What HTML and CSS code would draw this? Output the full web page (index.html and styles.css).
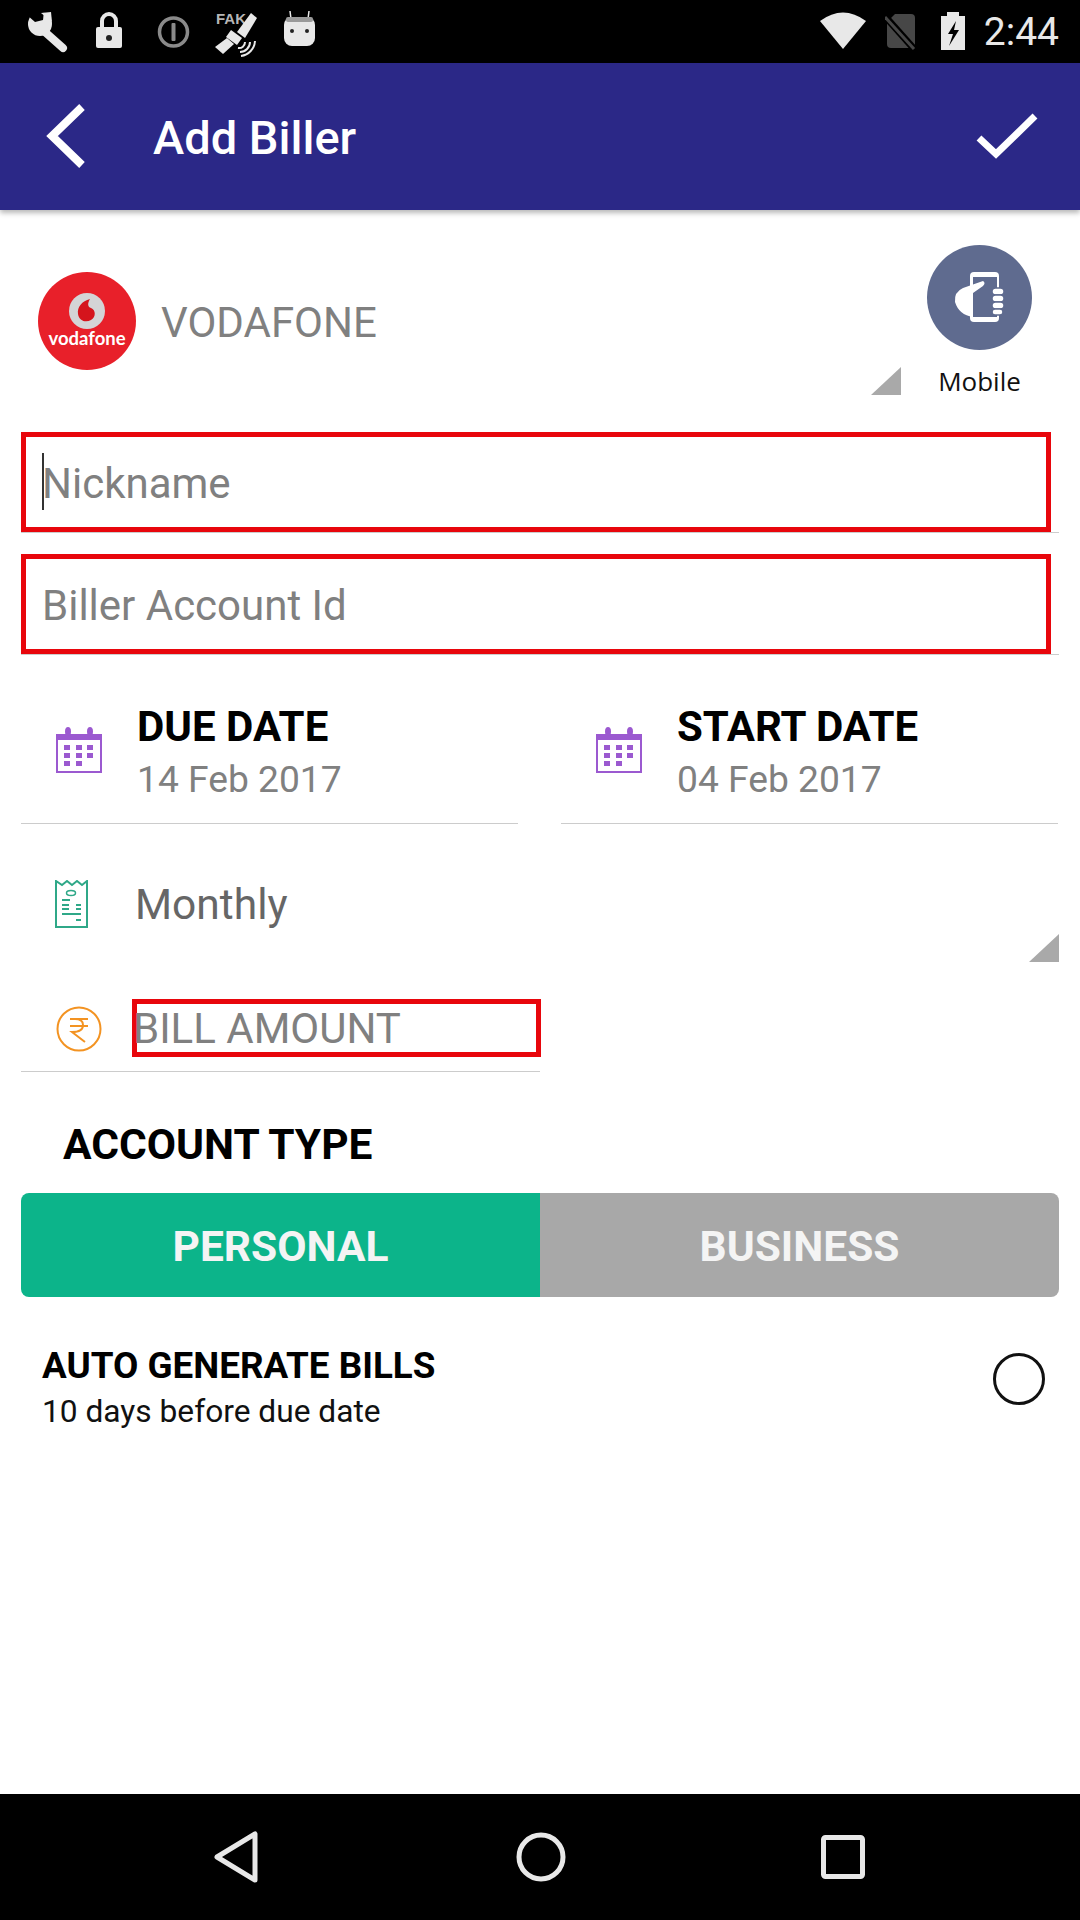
FILE: index.html
```html
<!DOCTYPE html>
<html>
<head>
    <meta charset="UTF-8">
    <title>Add Biller</title>
    <link rel="stylesheet" href="styles.css">
</head>
<body>
<div class="screen">
    <div class="status-bar">
        <svg class="st-wrench" width="41" height="63" viewBox="0 0 41 63">
            <path d="M18 32 L36 48" stroke="#e8e8e8" stroke-width="8" stroke-linecap="round"/>
            <circle cx="13" cy="24" r="12" fill="#e8e8e8"/>
            <path d="M-1 14 L8 22 L16 20 L17 11 L9 5 L0 5 Z" fill="#000"/>
            <path d="M14 13 L24 12 L25 22 Z" fill="#e8e8e8"/>
        </svg>
        <svg class="st-lock" width="26" height="63" viewBox="0 0 26 63">
            <path d="M6 28 V21 A7 7 0 0 1 20 21 V28" fill="none" stroke="#e8e8e8" stroke-width="4"/>
            <rect x="0" y="27" width="26" height="21" rx="2" fill="#e8e8e8"/>
            <circle cx="13" cy="38" r="3" fill="#222"/>
        </svg>
        <svg class="st-info" width="33" height="63" viewBox="0 0 33 63">
            <circle cx="16.5" cy="32" r="14" fill="none" stroke="#8a8a8a" stroke-width="3.5"/>
            <rect x="14.5" y="23" width="4" height="18" rx="1" fill="#8a8a8a"/>
        </svg>
        <svg class="st-sat" width="44" height="63" viewBox="0 0 44 63">
            <text class="fake-label" x="2" y="24">FAK</text>
            <path d="M23 32 L37 13 L43 18 L31 38 Z" fill="#e8e8e8"/>
            <path d="M17 30 L28 38 L23 45 L12 37 Z" fill="#e8e8e8"/>
            <path d="M13 38 L20 44 L9 54 L1 47 Z" fill="#e8e8e8"/>
            <path d="M26 52 A10 10 0 0 0 36 42 M27 56 A16 16 0 0 0 41 41 M24 48 A6 6 0 0 0 31 42" fill="none" stroke="#e8e8e8" stroke-width="2"/>
        </svg>
        <svg class="st-droid" width="31" height="63" viewBox="0 0 31 63">
            <path d="M7 19 L6 11 M24 19 L25 11" stroke="#e8e8e8" stroke-width="1.5"/>
            <rect x="0" y="17" width="31" height="29" rx="8" fill="#e8e8e8"/>
            <rect x="2" y="17" width="27" height="5" rx="2" fill="#9a9a9a"/>
            <circle cx="8" cy="31" r="2" fill="#222"/>
            <circle cx="23" cy="31" r="2" fill="#222"/>
        </svg>
        <svg class="st-wifi" width="46" height="63" viewBox="0 0 46 63">
            <path d="M0 21 Q23 4 46 21 L23 49 Z" fill="#e8e8e8"/>
        </svg>
        <svg class="st-sim" width="32" height="63" viewBox="0 0 32 63">
            <path d="M10 14 H26 Q30 14 30 18 V44 Q30 48 26 48 H6 Q2 48 2 44 V22 Z" fill="#474747"/>
            <path d="M-2 14 L30 50" stroke="#000" stroke-width="7"/>
            <path d="M0 17 L29 49" stroke="#474747" stroke-width="3"/>
        </svg>
        <svg class="st-batt" width="24" height="63" viewBox="0 0 24 63">
            <rect x="6" y="12" width="12" height="5" fill="#e8e8e8"/>
            <rect x="0" y="16" width="24" height="34" fill="#e8e8e8"/>
            <path d="M15 21 L7 34 H12 L8 46 L18 30 H13 Z" fill="#000"/>
        </svg>
        <span class="clock">2:44</span>
    </div>

    <div class="app-bar">
        <svg class="back-icon" width="40" height="64" viewBox="0 0 40 64">
            <path d="M36 3 L6 32 L36 61" fill="none" stroke="#fff" stroke-width="8"/>
        </svg>
        <h1 class="app-title">Add Biller</h1>
        <svg class="done-icon" width="62" height="46" viewBox="0 0 62 46">
            <path d="M3 25 L20 41 L59 3" fill="none" stroke="#fff" stroke-width="7"/>
        </svg>
    </div>

    <div class="content">
        <div class="biller-row">
            <svg class="biller-logo" width="98" height="98" viewBox="0 0 98 98">
                <circle cx="49" cy="49" r="49" fill="#e8202a"/>
                <circle cx="49" cy="39" r="18" fill="#d4d4d6"/>
                <path d="M52 27 C44 29 39 35 40 42 C41 49 48 51 53 48 C58 45 58 38 53 36 C50 35 49 32 52 27 Z" fill="#d5141c"/>
                <text class="logo-word" x="49" y="73">vodafone</text>
            </svg>
            <div class="biller-name">VODAFONE</div>
            <div class="spinner-mark biller-mark"></div>
            <div class="biller-type">
                <svg width="105" height="105" viewBox="0 0 105 105">
                    <circle cx="52.5" cy="52.5" r="52.5" fill="#5f6b8f"/>
                    <rect x="43" y="27" width="29" height="50" rx="4" fill="#fff"/>
                    <rect x="46" y="32" width="24" height="40" fill="#5f6b8f"/>
                    <path d="M56 36 Q59 38 56 41 L46 48 L46 72 Q32 70 28 57 Q27 47 36 43 Z" fill="#fff"/>
                    <g fill="#fff" stroke="#5f6b8f" stroke-width="1.5">
                        <rect x="65" y="43" width="12" height="7" rx="3.5"/>
                        <rect x="65" y="50" width="12" height="7" rx="3.5"/>
                        <rect x="65" y="57" width="12" height="7" rx="3.5"/>
                        <rect x="65" y="64" width="11" height="6" rx="3"/>
                    </g>
                </svg>
                <div class="type-label">Mobile</div>
            </div>
        </div>

        <div class="field">
            <div class="field-box field-caret">
                <span class="caret"></span><span class="hint">Nickname</span>
            </div>
        </div>
        <div class="field field-next">
            <div class="field-box">
                <span class="hint">Biller Account Id</span>
            </div>
        </div>

        <div class="date-row">
            <div class="date-cell">
                <svg class="cal-icon" width="46" height="46" viewBox="0 0 46 46">
                    <use href="#calendar"/>
                </svg>
                <div>
                    <div class="date-title">DUE DATE</div>
                    <div class="date-value">14 Feb 2017</div>
                </div>
            </div>
            <div class="date-cell">
                <svg class="cal-icon" width="46" height="46" viewBox="0 0 46 46">
                    <use href="#calendar"/>
                </svg>
                <div>
                    <div class="date-title">START DATE</div>
                    <div class="date-value">04 Feb 2017</div>
                </div>
            </div>
        </div>

        <div class="cycle-row">
            <svg class="receipt-icon" width="33" height="48" viewBox="0 0 33 48">
                <path d="M1 1 V47 H32 V1 L27 5 L22 1 L17 5 L12 1 L7 5 Z" fill="none" stroke="#2fa888" stroke-width="2"/>
                <ellipse cx="16" cy="13" rx="4.5" ry="2.5" fill="none" stroke="#2fa888" stroke-width="1.5"/>
                <path d="M7 20 H15 M7 25 H14 M21 25 H26 M7 29 H14 M21 29 H26 M7 34 H26 M21 40 H26" stroke="#2fa888" stroke-width="2"/>
            </svg>
            <div class="cycle-text">Monthly</div>
            <div class="spinner-mark cycle-mark"></div>
        </div>

        <div class="amount-row">
            <svg class="rupee-icon" width="46" height="46" viewBox="0 0 46 46">
                <circle cx="23" cy="23" r="21.5" fill="none" stroke="#f39322" stroke-width="2"/>
                <path d="M14 13 H32 M14 20 H32 M19 13 Q27 13 27 19 Q27 26 16 26 L29 36" fill="none" stroke="#f39322" stroke-width="2"/>
            </svg>
            <div class="amount-box"><span class="hint amount-hint">BILL AMOUNT</span></div>
        </div>

        <div class="section-title">ACCOUNT TYPE</div>
        <div class="toggle">
            <div class="toggle-item toggle-on">PERSONAL</div>
            <div class="toggle-item toggle-off">BUSINESS</div>
        </div>

        <div class="auto-row">
            <div>
                <div class="auto-title">AUTO GENERATE BILLS</div>
                <div class="auto-sub">10 days before due date</div>
            </div>
            <div class="radio"></div>
        </div>
    </div>

    <div class="nav-bar">
        <svg width="46" height="52" viewBox="0 0 46 52">
            <path d="M41 3 V49 L3 26 Z" fill="none" stroke="#e8e8e8" stroke-width="5" stroke-linejoin="round"/>
        </svg>
        <svg width="50" height="50" viewBox="0 0 50 50">
            <circle cx="25" cy="25" r="22" fill="none" stroke="#e8e8e8" stroke-width="5"/>
        </svg>
        <svg width="44" height="44" viewBox="0 0 44 44">
            <rect x="2.5" y="2.5" width="39" height="39" rx="2" fill="none" stroke="#e8e8e8" stroke-width="5"/>
        </svg>
    </div>
</div>

<svg class="icon-defs" width="0" height="0">
    <symbol id="calendar" viewBox="0 0 46 46">
        <rect x="1" y="8" width="44" height="37" fill="none" stroke="#9b59d0" stroke-width="2"/>
        <rect x="1" y="7" width="44" height="6" fill="#9b59d0"/>
        <ellipse cx="12" cy="4.5" rx="3" ry="4.5" fill="#9b59d0"/>
        <ellipse cx="34" cy="4.5" rx="3" ry="4.5" fill="#9b59d0"/>
        <g fill="#9b59d0">
            <rect x="8" y="18" width="6" height="5"/>
            <rect x="20" y="18" width="6" height="5"/>
            <rect x="31" y="18" width="6" height="5"/>
            <rect x="8" y="26" width="6" height="5"/>
            <rect x="20" y="26" width="6" height="5"/>
            <rect x="31" y="26" width="6" height="5"/>
            <rect x="8" y="34" width="6" height="5"/>
            <rect x="20" y="34" width="6" height="5"/>
        </g>
    </symbol>
</svg>
</body>
</html>
```

FILE: styles.css
```css
* {
    box-sizing: border-box;
}

body {
    margin: 0;
    background-color: #fff;
    font-family: Roboto, "Liberation Sans", sans-serif;
}

.screen {
    width: 1080px;
    height: 1920px;
    display: flex;
    flex-direction: column;
    overflow: hidden;
}

.icon-defs {
    position: absolute;
}

/* status bar */
.status-bar {
    height: 63px;
    flex-shrink: 0;
    display: flex;
    background-color: #000;
    padding-left: 27px;
}

.st-lock { margin-left: 28px; }
.st-info { margin-left: 35px; }
.st-sat { margin-left: 24px; }
.st-droid { margin-left: 26px; }
.st-wifi { margin-left: auto; }
.st-sim { margin-left: 19px; }
.st-batt { margin-left: 24px; }

.fake-label {
    font-family: "Liberation Sans", sans-serif;
    font-size: 15px;
    font-weight: bold;
    fill: #b5b5b5;
}

.clock {
    margin-left: 19px;
    margin-right: 21px;
    color: #e8e8e8;
    font-size: 39px;
    line-height: 64px;
}

/* app bar */
.app-bar {
    height: 147px;
    flex-shrink: 0;
    display: flex;
    align-items: center;
    padding-left: 46px;
    padding-right: 42px;
    background-color: #2b2887;
    box-shadow: 0 3px 5px rgba(0, 0, 0, 0.28);
    position: relative;
}

.back-icon {
    margin-top: -1px;
}

.app-title {
    margin: 3px 0 0 67px;
    color: #fff;
    font-size: 47px;
    font-weight: 500;
    line-height: 52px;
}

.done-icon {
    margin-left: auto;
    margin-top: -2px;
}

/* form */
.content {
    flex: 1;
}

.biller-row {
    height: 222px;
    display: flex;
    align-items: flex-start;
    padding-left: 38px;
    padding-top: 35px;
}

.biller-logo {
    margin-top: 27px;
}

.logo-word {
    font-family: Lato, sans-serif;
    font-size: 18.5px;
    font-weight: bold;
    fill: #fff;
    text-anchor: middle;
}

.biller-name {
    margin-left: 25px;
    margin-top: 55px;
    color: #808080;
    font-size: 42px;
    line-height: 46px;
}

.spinner-mark {
    width: 30px;
    height: 28px;
    background-color: #a9a9a9;
    clip-path: polygon(100% 0, 100% 100%, 0 100%);
}

.biller-mark {
    margin-left: auto;
    margin-top: 122px;
    margin-right: 26px;
}

.biller-type {
    width: 105px;
    margin-right: 48px;
    text-align: center;
}

.biller-type svg {
    display: block;
}

.type-label {
    margin-top: 13px;
    color: #111;
    font-family: "Open Sans", sans-serif;
    font-size: 26px;
    line-height: 36px;
}

.field {
    height: 101px;
    margin: 0 21px;
    border-bottom: 1px solid #ccc;
}

.field-next {
    margin-top: 21px;
}

.field-box {
    width: 1030px;
    height: 100px;
    display: flex;
    align-items: center;
    padding: 3px 0 0 16px;
    border: 5px solid #e8060c;
}

.caret {
    width: 2px;
    height: 57px;
    margin-top: -5px;
    margin-right: -2px;
    background-color: #333;
}

.hint {
    color: #808080;
    font-size: 42px;
    line-height: 46px;
}

.date-row {
    display: flex;
    gap: 43px;
    margin: 0 21px;
}

.date-cell {
    width: 497px;
    height: 169px;
    display: flex;
    align-items: flex-start;
    padding: 49px 0 0 35px;
    border-bottom: 1px solid #ccc;
}

.cal-icon {
    margin-top: 23px;
    margin-right: 35px;
    flex-shrink: 0;
}

.date-title {
    color: #000;
    font-size: 42px;
    font-weight: bold;
    line-height: 46px;
}

.date-value {
    margin-top: 7px;
    color: #808080;
    font-size: 37.2px;
    line-height: 44px;
}

.cycle-row {
    height: 138px;
    margin: 0 21px;
    display: flex;
    align-items: flex-start;
    padding-left: 34px;
}

.receipt-icon {
    margin-top: 56px;
    flex-shrink: 0;
}

.cycle-text {
    margin-left: 47px;
    margin-top: 58px;
    color: #666;
    font-size: 42.5px;
    line-height: 46px;
}

.cycle-mark {
    margin-left: auto;
    margin-top: 110px;
}

.amount-row {
    width: 519px;
    height: 73px;
    margin: 37px 0 0 21px;
    display: flex;
    align-items: flex-start;
    padding-left: 35px;
    border-bottom: 1px solid #ccc;
}

.rupee-icon {
    margin-top: 7px;
    flex-shrink: 0;
}

.amount-box {
    width: 409px;
    height: 58px;
    margin-left: 30px;
    flex-shrink: 0;
    border: 5px solid #e8060c;
    white-space: nowrap;
}

.amount-hint {
    display: block;
    margin-left: -4px;
    margin-top: 2px;
}

.section-title {
    margin: 50px 0 0 63px;
    color: #000;
    font-size: 42.5px;
    font-weight: bold;
    line-height: 46px;
}

.toggle {
    height: 104px;
    margin: 25px 21px 0;
    display: flex;
    border-radius: 8px;
    overflow: hidden;
}

.toggle-item {
    width: 50%;
    display: flex;
    align-items: center;
    justify-content: center;
    padding-top: 3px;
    color: #f4f4f4;
    font-size: 42.5px;
    font-weight: bold;
}

.toggle-on {
    background-color: #0cb48a;
}

.toggle-off {
    background-color: #a8a8a8;
}

.auto-row {
    margin: 49px 35px 0 42px;
    display: flex;
    align-items: flex-start;
    justify-content: space-between;
}

.auto-title {
    color: #000;
    font-size: 36.8px;
    font-weight: bold;
    line-height: 40px;
}

.auto-sub {
    margin-top: 8px;
    color: #111;
    font-size: 31.7px;
    line-height: 36px;
}

.radio {
    width: 52px;
    height: 52px;
    margin-top: 7px;
    border: 3.5px solid #111;
    border-radius: 50%;
}

/* nav bar */
.nav-bar {
    height: 126px;
    flex-shrink: 0;
    display: flex;
    align-items: center;
    justify-content: space-between;
    padding: 0 215px 0 214px;
    background-color: #000;
}
```
